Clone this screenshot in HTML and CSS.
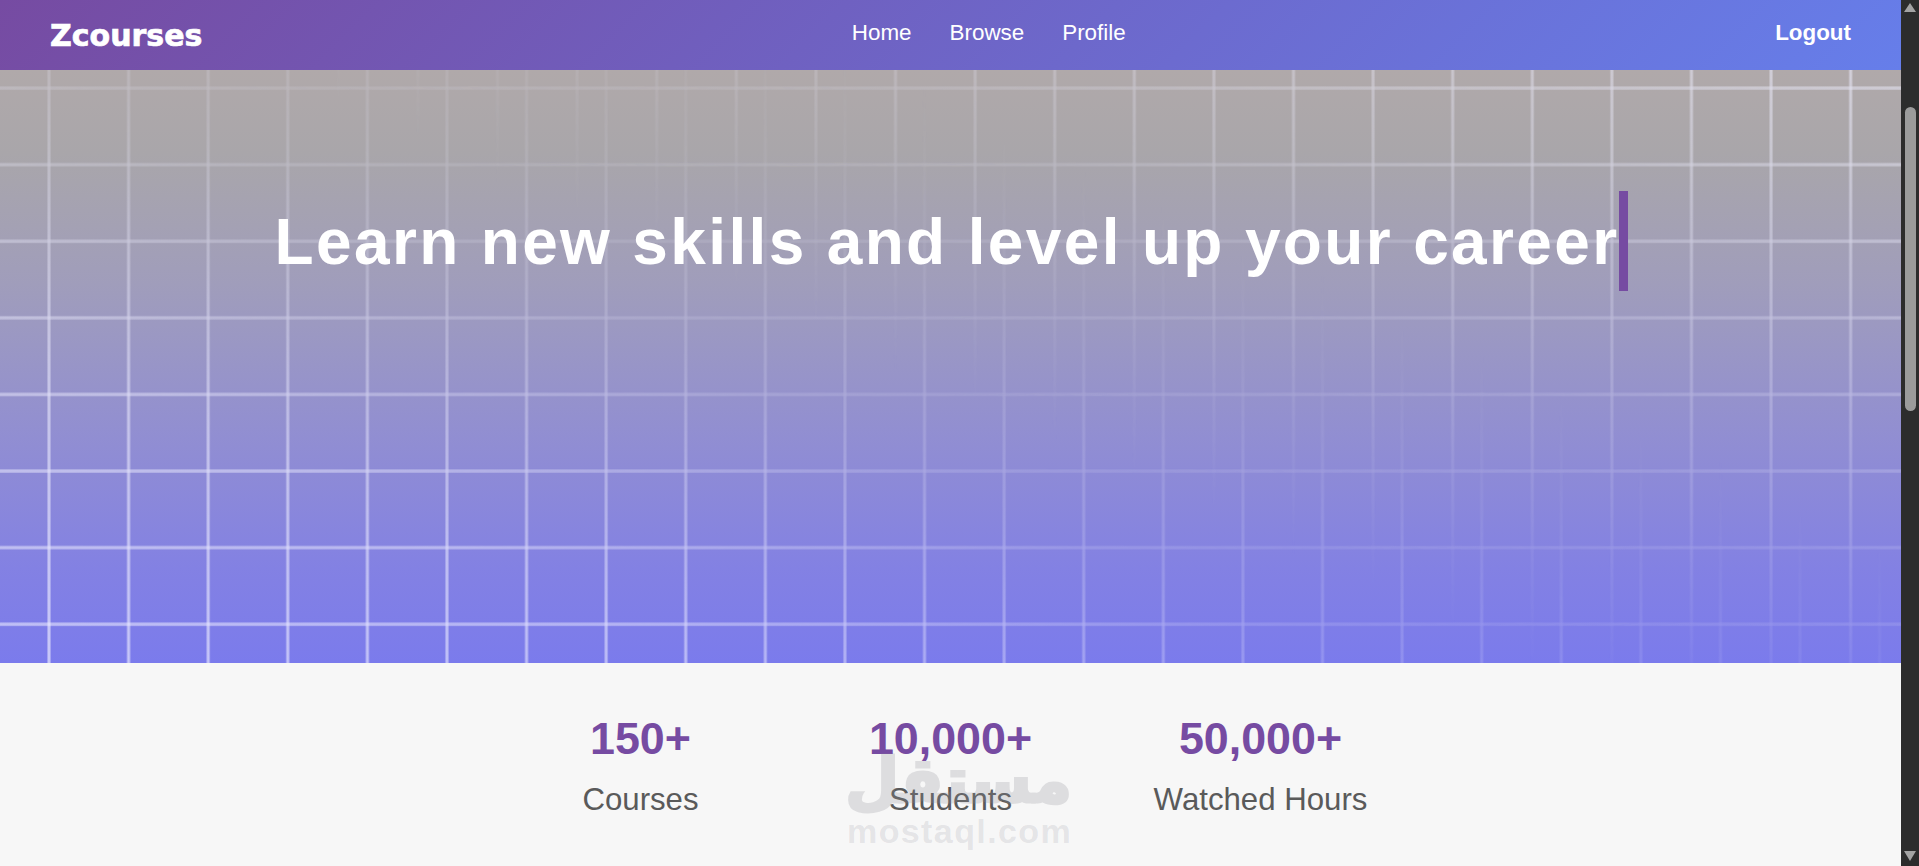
FILE: index.html
```html
<!DOCTYPE html>
<html lang="en">
<head>
<meta charset="utf-8">
<title>Zcourses</title>
<link rel="stylesheet" href="styles.css">
</head>
<body>
<div class="window">
  <div class="page">
    <nav class="navbar">
      <a class="logo" href="#">Zcourses</a>
      <ul class="nav-links">
        <li><a href="#">Home</a></li>
        <li><a href="#">Browse</a></li>
        <li><a href="#">Profile</a></li>
      </ul>
      <a class="logout" href="#">Logout</a>
    </nav>
    <section class="hero">
      <h1 class="hero-title">Learn new skills and level up your career</h1>
    </section>
    <section class="stats">
      <div class="stat">
        <div class="stat-number">150+</div>
        <div class="stat-label">Courses</div>
      </div>
      <div class="stat">
        <div class="stat-number">10,000+</div>
        <div class="stat-label">Students</div>
      </div>
      <div class="stat">
        <div class="stat-number">50,000+</div>
        <div class="stat-label">Watched Hours</div>
      </div>
      <div class="watermark">
        <div class="watermark-ar" dir="rtl" lang="ar">مستقل</div>
        <div class="watermark-en">mostaql.com</div>
      </div>
    </section>
  </div>
  <aside class="scrollbar">
    <span class="arrow-up"></span>
    <span class="thumb"></span>
    <span class="arrow-down"></span>
  </aside>
</div>
</body>
</html>
```

FILE: styles.css
```css
* { box-sizing: border-box; }
html, body { margin: 0; height: 100%; overflow: hidden; }
body { font-family: "Liberation Sans", Arial, sans-serif; background: #f7f7f7; }
a { color: #fff; text-decoration: none; }

.window { display: flex; height: 866px; overflow: hidden; }
.page { flex: 1; min-width: 0; display: flex; flex-direction: column; }

/* Navbar */
.navbar {
  height: 70px;
  flex: none;
  display: flex;
  justify-content: space-between;
  align-items: center;
  padding: 0 50px;
  background: linear-gradient(135deg, #764ba2 0%, #667eea 100%);
}
.logo {
  font-family: "DejaVu Sans", sans-serif;
  font-weight: 700;
  font-size: 30px;
  line-height: 70px;
  padding-top: 2px;
  -webkit-text-stroke: 0.7px #fff;
}
.nav-links {
  display: flex;
  gap: 38px;
  list-style: none;
  margin: 0;
  padding: 0 0 4px;
  font-size: 22.4px;
}
.logout { padding-bottom: 4px; font-size: 22.4px; font-weight: 700; }

/* Hero */
.hero {
  position: relative;
  height: 593px;
  flex: none;
  padding-top: 121px;
  display: flex;
  justify-content: center;
  align-items: flex-start;
  background: linear-gradient(180deg, #b0a9aa 0%, #a9a6aa 14%, #a09dbb 36%, #918ed2 62%, #8381e3 84%, #7b7bec 100%);
  overflow: hidden;
}
.hero::before,
.hero::after {
  content: "";
  position: absolute;
  inset: 0;
  background-image:
    linear-gradient(90deg, rgba(238,238,255,.15) 0, rgba(238,238,255,.68) 1.2px, rgba(238,238,255,.68) 2.8px, rgba(238,238,255,.15) 4px, transparent 4px),
    linear-gradient(180deg, rgba(238,238,255,.18) 0, rgba(238,238,255,.6) 1.2px, rgba(238,238,255,.6) 3px, rgba(238,238,255,.18) 4.4px, transparent 4.4px);
  background-size: 79.6px 100%, 100% 76.6px;
  background-repeat: repeat-x, repeat-y;
}
.hero::before {
  background-position: 47px 0, 0 16px;
  -webkit-mask-image: linear-gradient(25deg, #000 0%, rgba(0,0,0,.8) 22%, rgba(0,0,0,.55) 32%, rgba(0,0,0,.3) 42%, rgba(0,0,0,.12) 56%, transparent 68%);
  mask-image: linear-gradient(25deg, #000 0%, rgba(0,0,0,.8) 22%, rgba(0,0,0,.55) 32%, rgba(0,0,0,.3) 42%, rgba(0,0,0,.12) 56%, transparent 68%);
}
.hero::after {
  background-position: 18px 0, 0 16px;
  -webkit-mask-image: linear-gradient(25deg, transparent 48%, rgba(0,0,0,.16) 60%, rgba(0,0,0,.4) 75%, rgba(0,0,0,.85) 100%);
  mask-image: linear-gradient(25deg, transparent 48%, rgba(0,0,0,.16) 60%, rgba(0,0,0,.4) 75%, rgba(0,0,0,.85) 100%);
}
.hero-title {
  position: relative;
  z-index: 1;
  margin: 0 0 0 2px;
  padding-top: 2px;
  color: #fff;
  font-size: 64px;
  font-weight: 700;
  line-height: 98px;
  letter-spacing: 2.35px;
  white-space: nowrap;
  border-right: 9px solid #764ba2;
}

/* Stats */
.stats {
  position: relative;
  flex: 1;
  display: grid;
  grid-template-columns: repeat(3, 310px);
  justify-content: center;
  align-content: start;
  padding-top: 50px;
  background: #f7f7f7;
  text-align: center;
}
.stat-number { font-size: 44.8px; font-weight: 700; line-height: 51px; color: #764ba2; }
.stat-label { margin-top: 18px; font-size: 31.2px; line-height: 36px; color: #5a5a5a; }

/* Watermark lying over the stats */
.watermark {
  position: absolute;
  left: 847px;
  top: 85px;
  width: 225px;
  text-align: center;
  pointer-events: none;
}
.watermark-ar {
  font-family: "DejaVu Sans", sans-serif;
  font-weight: 700;
  font-size: 62px;
  line-height: 66px;
  color: #8d8d95;
  -webkit-text-stroke: 3px #8d8d95;
  opacity: .24;
  white-space: nowrap;
}
.watermark-en {
  font-weight: 700;
  font-size: 34px;
  line-height: 34px;
  letter-spacing: 1.4px;
  color: rgba(110, 110, 120, .15);
  white-space: nowrap;
}

/* Scrollbar */
.scrollbar {
  width: 18px;
  flex: none;
  display: flex;
  flex-direction: column;
  align-items: center;
  background: #2c2c2c;
}
.arrow-up {
  margin-top: 3px;
  border-left: 6px solid transparent;
  border-right: 6px solid transparent;
  border-bottom: 9px solid #a3a3a3;
}
.thumb {
  width: 11px;
  height: 304px;
  margin-top: 95px;
  border-radius: 6px;
  background: #9b9b9b;
}
.arrow-down {
  margin-top: auto;
  margin-bottom: 5px;
  border-left: 6px solid transparent;
  border-right: 6px solid transparent;
  border-top: 10px solid #a3a3a3;
}
```
